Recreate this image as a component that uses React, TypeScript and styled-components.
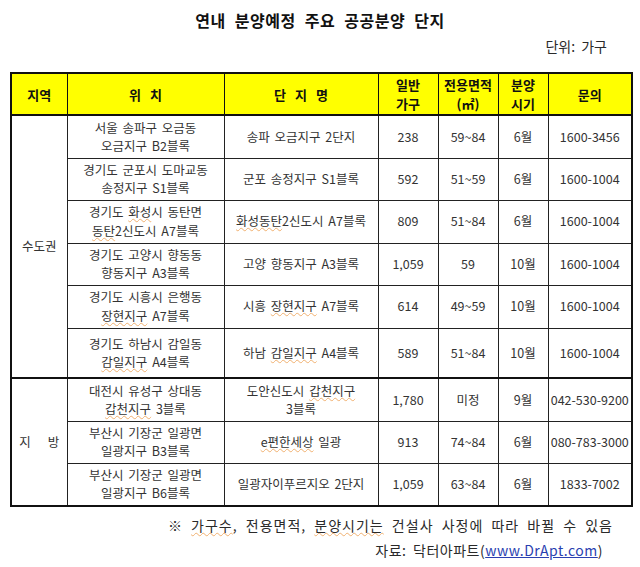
import React from "react";
import styled, { createGlobalStyle } from "styled-components";

const Global = createGlobalStyle`
  html, body { margin: 0; padding: 0; background: #ffffff; }
  body { font-family: "Noto Sans CJK KR", "Noto Sans", sans-serif; color: #222; }
`;

const Page = styled.div`
  width: 640px;
  height: 567px;
  background: #fff;
  display: flex;
  flex-direction: column;
`;

const Title = styled.h1`
  margin: 8px 0 0;
  font-size: 16px;
  line-height: 24px;
  font-weight: 700;
  text-align: center;
  letter-spacing: 0.5px;
  word-spacing: 5px;
  color: #111;
`;

const RightLine = styled.div<{ $pr: number; $mt: number; $ls?: number; $ws?: number }>`
  margin-top: ${(p) => p.$mt}px;
  padding-right: ${(p) => p.$pr}px;
  text-align: right;
  font-size: 14px;
  line-height: 21px;
  color: #2a2a2a;
  letter-spacing: ${(p) => p.$ls ?? 0}px;
  word-spacing: ${(p) => p.$ws ?? 3}px;
`;

const Table = styled.table`
  margin: 15px 0 0 10px;
  width: 621px;
  table-layout: fixed;
  border-collapse: collapse;
  border: 2px solid #111;
`;

const HeadCell = styled.th`
  background: #ffff00;
  border: 1px solid #111;
  border-bottom: 2px solid #111;
  height: 40px;
  padding: 0;
  font-size: 13px;
  line-height: 19px;
  font-weight: 700;
  color: #111;
  text-align: center;
  vertical-align: middle;
  word-spacing: 6px;
`;

const Row = styled.tr<{ $h: number; $sep?: boolean }>`
  height: ${(p) => p.$h}px;
  ${(p) => (p.$sep ? "& > td { border-top: 2px solid #111; }" : "")}
`;

const Cell = styled.td<{ $wide?: boolean }>`
  border: 1px solid #222;
  padding: 0;
  font-size: 12.5px;
  line-height: 18.2px;
  color: #333;
  text-align: center;
  vertical-align: middle;
  word-spacing: ${(p) => (p.$wide ? "14px" : "2px")};
  white-space: nowrap;
`;

const Spell = styled.span`
  text-decoration: underline wavy #f0b070;
  text-decoration-thickness: 1px;
  text-underline-offset: 1px;
`;

const Link = styled.a`
  color: #2a3fb0;
  text-decoration: underline;
`;

const Footer = styled.div`
  display: flex;
  flex-direction: column;
`;

type RowData = {
  loc: React.ReactNode;
  name: React.ReactNode;
  count: string;
  area: string;
  month: string;
  phone: string;
  h: number;
};

const metro: RowData[] = [
  { loc: <>서울 송파구 오금동<br />오금지구 B2블록</>, name: "송파 오금지구 2단지", count: "238", area: "59~84", month: "6월", phone: "1600-3456", h: 43 },
  { loc: <>경기도 군포시 도마교동<br />송정지구 S1블록</>, name: "군포 송정지구 S1블록", count: "592", area: "51~59", month: "6월", phone: "1600-1004", h: 42 },
  { loc: <>경기도 <Spell>화성</Spell>시 동탄면<br /><Spell>동탄</Spell>2신도시 A7블록</>, name: <><Spell>화성동탄</Spell>2신도시 A7블록</>, count: "809", area: "51~84", month: "6월", phone: "1600-1004", h: 43 },
  { loc: <>경기도 고양시 향동동<br />향동지구 A3블록</>, name: "고양 향동지구 A3블록", count: "1,059", area: "59", month: "10월", phone: "1600-1004", h: 42 },
  { loc: <>경기도 시흥시 은행동<br /><Spell>장현지구</Spell> A7블록</>, name: <>시흥 <Spell>장현지구</Spell> A7블록</>, count: "614", area: "49~59", month: "10월", phone: "1600-1004", h: 43 },
  { loc: <>경기도 하남시 감일동<br /><Spell>감일지구</Spell> A4블록</>, name: <>하남 <Spell>감일지구</Spell> A4블록</>, count: "589", area: "51~84", month: "10월", phone: "1600-1004", h: 50 },
];

const local: RowData[] = [
  { loc: <>대전시 유성구 상대동<br /><Spell>갑천지구</Spell> 3블록</>, name: <>도안신도시 <Spell>갑천지구</Spell><br />3블록</>, count: "1,780", area: "미정", month: "9월", phone: "042-530-9200", h: 43 },
  { loc: <>부산시 기장군 일광면<br />일광지구 B3블록</>, name: <><Spell>e편한세상</Spell> 일광</>, count: "913", area: "74~84", month: "6월", phone: "080-783-3000", h: 42 },
  { loc: <>부산시 기장군 일광면<br />일광지구 B6블록</>, name: "일광자이푸르지오 2단지", count: "1,059", area: "63~84", month: "6월", phone: "1833-7002", h: 43 },
];

const widths = [56, 157, 154, 60, 60, 50, 84];

const renderRows = (rows: RowData[], region: string, wide: boolean, sep: boolean) =>
  rows.map((r, i) => (
    <Row key={region + i} $h={r.h} $sep={sep && i === 0}>
      {i === 0 && (
        <Cell rowSpan={rows.length} $wide={wide}>
          {region}
        </Cell>
      )}
      <Cell>{r.loc}</Cell>
      <Cell>{r.name}</Cell>
      <Cell>{r.count}</Cell>
      <Cell>{r.area}</Cell>
      <Cell>{r.month}</Cell>
      <Cell>{r.phone}</Cell>
    </Row>
  ));

export default function App() {
  return (
    <Page>
      <Global />
      <Title>연내 분양예정 주요 공공분양 단지</Title>
      <RightLine $pr={33} $mt={4}>단위: 가구</RightLine>
      <Table>
        <colgroup>
          {widths.map((w, i) => (
            <col key={i} style={{ width: w }} />
          ))}
        </colgroup>
        <thead>
          <tr>
            <HeadCell>지역</HeadCell>
            <HeadCell>위 치</HeadCell>
            <HeadCell>단 지 명</HeadCell>
            <HeadCell>일반<br />가구</HeadCell>
            <HeadCell>전용면적<br />(㎡)</HeadCell>
            <HeadCell>분양<br />시기</HeadCell>
            <HeadCell>문의</HeadCell>
          </tr>
        </thead>
        <tbody>
          {renderRows(metro, "수도권", false, false)}
          {renderRows(local, "지 방", true, true)}
        </tbody>
      </Table>
      <Footer>
        <RightLine $pr={27} $mt={8} $ls={1} $ws={4}>
          ※ <Spell>가구수</Spell>, 전용면적, <Spell>분양시기는</Spell> 건설사 사정에 따라 바뀔 수 있음
        </RightLine>
        <RightLine $pr={37} $mt={4} $ls={0.5}>
          자료: 닥터아파트(<Link href="#">www.DrApt.com</Link>)
        </RightLine>
      </Footer>
    </Page>
  );
}
